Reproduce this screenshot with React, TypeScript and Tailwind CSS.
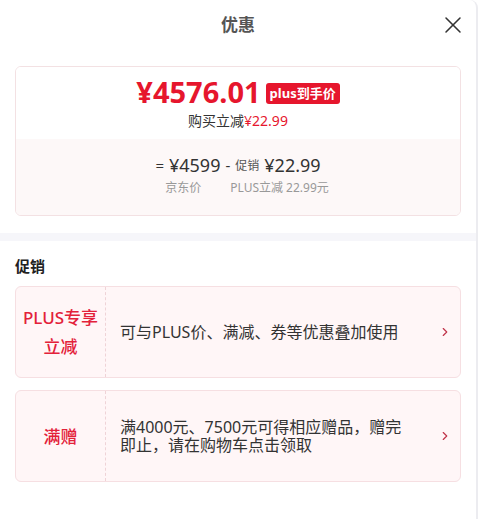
import { ChevronRight, X } from "lucide-react";

const font = { fontFamily: '"Noto Sans", "Noto Sans CJK SC", sans-serif' };

function PromoCard({ label, text }: { label: React.ReactNode; text: React.ReactNode }) {
  return (
    <div className="flex h-[92px] rounded-md border border-[#f6dfe2] bg-[#fff6f7]">
      <div className="flex w-[90px] shrink-0 items-center justify-center border-r border-dashed border-[#efd3d7] text-center text-[17px] leading-[29px] font-medium text-[#e3213a]">
        {label}
      </div>
      <div className="flex flex-1 items-center pl-[14px] pr-2">
        <p className="max-w-[286px] text-[16px] leading-[18px] text-[#333]">{text}</p>
      </div>
      <div className="flex w-[30px] items-center justify-center text-[#c0344a]">
        <ChevronRight size={14} strokeWidth={2} />
      </div>
    </div>
  );
}

export default function App() {
  return (
    <div className="h-[519px] w-[482px] bg-white" style={font}>
      <div className="h-full w-[478px] rounded-tr-lg border-r-2 border-[#ececf0] bg-white">
        <div className="relative flex h-[50px] items-center justify-center">
          <span className="text-[17px] font-bold text-[#555]">优惠</span>
          <button className="absolute right-[9px] top-[11px] text-[#333]">
            <X size={28} strokeWidth={1.3} />
          </button>
        </div>

        <div className="px-[15px] pt-[16px] pb-[17px]">
          <div className="overflow-hidden rounded-md border border-[#f3e1e3]">
            <div className="flex h-[72px] flex-col items-center bg-white pt-[10px]">
              <div className="flex h-[30px] items-center">
                <span className="text-[29px] leading-[30px] font-bold text-[#e6162d]">
                  ¥4576.01
                </span>
                <span className="ml-[5px] mt-[2px] rounded-[3px] bg-[#e6162d] px-[4px] text-[13px] leading-[21px] font-bold text-white">
                  plus到手价
                </span>
              </div>
              <div className="mt-[5px] text-[14px] leading-[18px] text-[#333]">
                购买立减<span className="text-[#e6162d]">¥22.99</span>
              </div>
            </div>
            <div className="flex h-[76px] flex-col items-center bg-[#fdf8f8] pt-[14px]">
              <div className="flex items-center gap-[5px] text-[#333]">
                <span className="text-[15px]">=</span>
                <span className="text-[18px] leading-[25px]">¥4599</span>
                <span className="text-[15px]">-</span>
                <span className="text-[12px] text-[#555]">促销</span>
                <span className="text-[18px] leading-[25px]">¥22.99</span>
              </div>
              <div className="ml-[18px] flex gap-[29px] text-[12px] leading-[20px] text-[#999]">
                <span>京东价</span>
                <span>PLUS立减 22.99元</span>
              </div>
            </div>
          </div>
        </div>

        <div className="h-[8px] bg-[#f6f6fa]" />

        <div className="px-[15px] pt-[15px]">
          <div className="text-[15px] leading-[20px] font-bold text-[#222]">促销</div>
          <div className="mt-[10px] flex flex-col gap-[12px]">
            <PromoCard
              label={
                <span>
                  PLUS专享
                  <br />
                  立减
                </span>
              }
              text="可与PLUS价、满减、券等优惠叠加使用"
            />
            <PromoCard
              label="满赠"
              text="满4000元、7500元可得相应赠品，赠完即止，请在购物车点击领取"
            />
          </div>
        </div>
      </div>
    </div>
  );
}
